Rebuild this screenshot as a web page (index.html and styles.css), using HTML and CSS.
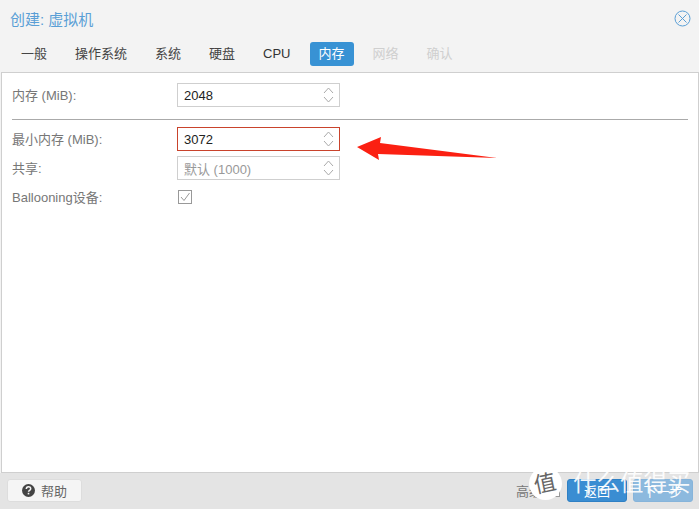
FILE: index.html
```html
<!DOCTYPE html>
<html lang="zh">
<head>
<meta charset="utf-8">
<title>创建: 虚拟机</title>
<link rel="stylesheet" href="styles.css">
</head>
<body>
<div class="window">
  <header class="titlebar">
    <span class="title">创建: 虚拟机</span>
    <svg class="close" width="17" height="17" viewBox="0 0 17 17"><circle cx="8.5" cy="8.5" r="7.5"/><path d="M4.5 4.5l8 8M12.5 4.5l-8 8"/></svg>
  </header>
  <nav class="tabs">
    <span class="tab">一般</span>
    <span class="tab">操作系统</span>
    <span class="tab">系统</span>
    <span class="tab">硬盘</span>
    <span class="tab latin">CPU</span>
    <span class="tab active">内存</span>
    <span class="tab disabled">网络</span>
    <span class="tab disabled">确认</span>
  </nav>
  <main class="panel">
    <div class="row first">
      <span class="label">内存 (MiB):</span>
      <div class="field"><span>2048</span><svg class="spin" width="11" height="20" viewBox="0 0 11 20"><path d="M1 8l4.500-5 4.500 5M1 12l4.500 5 4.500-5"/></svg></div>
    </div>
    <hr class="sep">
    <div class="row">
      <span class="label">最小内存 (MiB):</span>
      <div class="field invalid"><span>3072</span><svg class="spin" width="11" height="20" viewBox="0 0 11 20"><path d="M1 8l4.500-5 4.500 5M1 12l4.500 5 4.500-5"/></svg></div>
    </div>
    <div class="row tight">
      <span class="label">共享:</span>
      <div class="field muted"><span>默认 (1000)</span><svg class="spin" width="11" height="20" viewBox="0 0 11 20"><path d="M1 8l4.500-5 4.500 5M1 12l4.500 5 4.500-5"/></svg></div>
    </div>
    <div class="row check-row">
      <span class="label">Ballooning设备:</span>
      <svg class="check" width="14" height="14" viewBox="0 0 14 14"><rect x=".5" y=".5" width="13" height="13"/><path d="M3 7l3 3.500 5.500-7.500"/></svg>
    </div>
  </main>
  <footer class="footer">
    <button class="btn help">
      <svg width="13" height="13" viewBox="0 0 13 13"><circle cx="6.500" cy="6.500" r="6.500" fill="#444"/><path d="M4.300 5c0-3 4.400-3 4.400-.3 0 1.600-2.200 1.500-2.200 3" fill="none" stroke="#f5f5f5" stroke-width="1.500"/><rect x="5.700" y="8.800" width="1.600" height="1.600" fill="#f5f5f5"/></svg>
      <span>帮助</span>
    </button>
    <div class="spacer"></div>
    <span class="adv">高级</span>
    <span class="adv-box"></span>
    <button class="btn primary">返回</button>
    <button class="btn primary off">下一步</button>
  </footer>
  <svg class="arrow" width="150" height="30" viewBox="0 0 150 30"><polygon points="7,18 31,8 30,14 147,29 28,25 29,31" fill="#fb2012"/></svg>
  <div class="mark">
    <span class="mark-seal"><span>值</span></span>
    <span class="mark-text">什么值得买</span>
  </div>
</div>
</body>
</html>
```

FILE: styles.css
```css
* { box-sizing: border-box; }
html, body { margin: 0; padding: 0; }
body {
  width: 699px;
  height: 509px;
  overflow: hidden;
  font-family: "Liberation Sans", "Noto Sans CJK SC", sans-serif;
  font-size: 13px;
  color: #555;
}
.window {
  position: relative;
  width: 699px;
  height: 509px;
  display: flex;
  flex-direction: column;
  background: #f3f3f3;
}
.titlebar {
  height: 38px;
  padding: 0 8px 2px 10px;
  display: flex;
  align-items: center;
  justify-content: space-between;
}
.title { font-size: 15px; color: #5a9fd6; }
.close { fill: none; stroke: #5a9fd6; stroke-width: 1; }
.tabs {
  height: 34px;
  padding: 4px 0 6px 12px;
  display: flex;
  gap: 10px;
  align-items: stretch;
}
.tab {
  padding: 0 9px 3px;
  display: flex;
  align-items: center;
  border-radius: 3px;
  color: #444;
}
.tab.latin { padding-bottom: 1px; color: #333; }
.tab.active { background: #3892d4; color: #fff; }
.tab.disabled { color: #cfcfcf; }
.panel {
  flex: 1;
  margin: 0 0 0 1px;
  padding: 10px 10px 0;
  background: #fff;
  border: 1px solid #cfcfcf;
}
.row { display: flex; align-items: center; height: 24px; }
.row.tight { margin-top: 5px; }
.check-row { margin-top: 5px; height: 24px; }
.label { width: 165px; padding-bottom: 2px; color: #777; flex: none; }
.field {
  width: 163px;
  height: 24px;
  border: 1px solid #cfcfcf;
  padding: 0 5px 0 6px;
  display: flex;
  align-items: center;
  justify-content: space-between;
  font-size: 13px;
  color: #222;
}
.field.invalid { border-color: #c9432c; }
.field.muted { color: #999; height: 24px; }
.spin { fill: none; stroke: #aaa; stroke-width: 1; }
.check { margin-left: 1px; fill: none; stroke: #999; stroke-width: 1; }
.sep {
  margin: 12px 0 7px;
  height: 1px;
  border: 0;
  background: #aaa;
}
.footer {
  height: 36px;
  padding: 6px 6px 7px 7px;
  display: flex;
  align-items: stretch;
  background: #e4e4e4;
}
.btn {
  font: inherit;
  border-radius: 3px;
  display: flex;
  align-items: center;
  justify-content: center;
  padding: 0;
  border: 1px solid #ddd;
}
.help {
  width: 75px;
  gap: 6px;
  background: #f5f5f5;
  color: #666;
}
.spacer { flex: 1; }
.adv { color: #777; align-self: center; }
.adv-box {
  width: 13px;
  height: 13px;
  margin: 0 7px 0 5px;
  align-self: center;
  border: 1px solid #999;
  background: #fff;
}
.primary {
  width: 60px;
  margin-right: 6px;
  background: #3a8dd2;
  border-color: #2f80c4;
  color: #fff;
}
.primary.off { margin-right: 0; background: #8cb9de; border-color: #86b4da; }
.arrow { position: absolute; left: 350px; top: 129px; overflow: visible; }
.mark {
  position: absolute;
  left: 529px;
  top: 465px;
  display: flex;
  align-items: center;
  gap: 11px;
  pointer-events: none;
}
.mark-seal {
  width: 33px;
  height: 33px;
  margin-top: 2px;
  border-radius: 50%;
  background: #fff;
  display: flex;
  align-items: center;
  justify-content: center;
  color: #666;
  font-size: 22px;
  line-height: 1;
}
.mark-seal span { transform: rotate(-12deg); }
.mark-text {
  font-size: 23.5px;
  line-height: 30px;
  color: rgba(255,255,255,.92);
  white-space: nowrap;
}
```
